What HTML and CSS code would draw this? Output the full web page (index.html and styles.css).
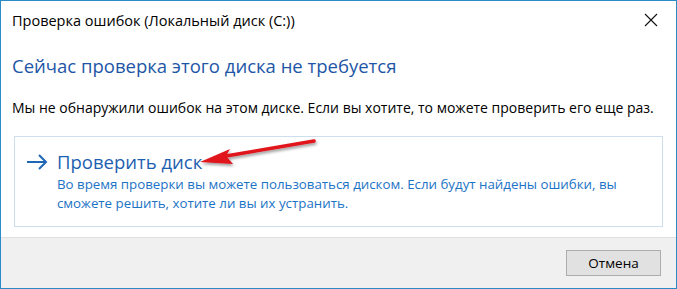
FILE: index.html
```html
<!DOCTYPE html>
<html lang="ru">
<head>
    <meta charset="UTF-8">
    <meta name="viewport" content="width=device-width, initial-scale=1.0">
    <title>Проверка ошибок</title>
    <link rel="stylesheet" href="styles.css">
</head>
<body>
    <div class="window">
        <div class="titlebar">
            <span class="title">Проверка ошибок (Локальный диск (C:))</span>
            <span class="close">
                <svg width="14" height="14" viewBox="0 0 14 14">
                    <path d="M1 1 L13 13 M13 1 L1 13" stroke="#111" stroke-width="1.1" fill="none"/>
                </svg>
            </span>
        </div>

        <div class="content">
            <h1 class="heading">Сейчас проверка этого диска не требуется</h1>
            <p class="message">Мы не обнаружили ошибок на этом диске. Если вы хотите, то можете проверить его еще раз.</p>

            <div class="command-link">
                <div class="command-row">
                    <svg class="command-arrow" width="22" height="16" viewBox="0 0 22 16">
                        <path d="M1 8 H20 M13 1 L20 8 L13 15" stroke="#1f66b5" stroke-width="2" fill="none"/>
                    </svg>
                    <span class="command-title">Проверить диск</span>
                </div>
                <p class="command-desc">Во время проверки вы можете пользоваться диском. Если будут найдены ошибки, вы сможете решить, хотите ли вы их устранить.</p>
            </div>
        </div>

        <div class="footer">
            <button class="btn">Отмена</button>
        </div>

        <!-- red annotation arrow drawn over the dialog -->
        <svg class="annotation" width="677" height="289" viewBox="0 0 677 289">
            <defs>
                <filter id="shadow" x="-10%" y="-50%" width="120%" height="200%">
                    <feGaussianBlur in="SourceAlpha" stdDeviation="1.5"/>
                    <feOffset dx="1" dy="2"/>
                    <feComponentTransfer><feFuncA type="linear" slope="0.4"/></feComponentTransfer>
                    <feMerge><feMergeNode/><feMergeNode in="SourceGraphic"/></feMerge>
                </filter>
            </defs>
            <g filter="url(#shadow)">
                <path d="M314 141 L226 156" stroke="#e0141c" stroke-width="3.5" stroke-linecap="round" fill="none"/>
                <path d="M200 162 L230 149 L226 156 L233 164 Z" fill="#e0141c"/>
            </g>
        </svg>
    </div>
</body>
</html>
```

FILE: styles.css
```css
body {
    margin: 0;
    padding: 0;
    font-family: 'Open Sans', 'Noto Sans', sans-serif;
    background-color: #fff;
    color: #000;
}

.window {
    position: relative;
    width: 677px;
    height: 289px;
    box-sizing: border-box;
    border: 1px solid #2a8bc6;
    display: flex;
    flex-direction: column;
    background-color: #fff;
}

.titlebar {
    height: 38px;
    display: flex;
    align-items: center;
    justify-content: space-between;
    padding: 0 18px 0 11px;
    flex-shrink: 0;
}

.title {
    font-size: 14.5px;
    color: #000;
}

.close {
    display: flex;
    align-items: center;
}

.content {
    flex: 1;
    padding: 0 13px 0 11px;
}

.heading {
    margin: 14px 0 0;
    font-size: 18.5px;
    font-weight: normal;
    color: #1d56a6;
}

.message {
    margin: 20px 0 0;
    font-size: 14px;
    color: #000;
}

.command-link {
    margin: 19px 0 0 2px;
    border: 1px solid #cfdeec;
    padding: 12px 0 13px 11px;
    height: 64px;
}

.command-row {
    display: flex;
    align-items: center;
    gap: 9px;
}

.command-title {
    font-size: 18.5px;
    color: #1d5fb0;
    line-height: 26px;
}

.command-desc {
    margin: 0 0 0 31px;
    font-size: 13.3px;
    line-height: 19px;
    color: #1b73c6;
}

.footer {
    height: 50px;
    flex-shrink: 0;
    background-color: #f0f0f0;
    border-top: 1px solid #e0e0e0;
    display: flex;
    align-items: center;
    justify-content: flex-end;
    padding-right: 15px;
}

.btn {
    width: 95px;
    height: 26px;
    background-color: #e1e1e1;
    border: 1px solid #adadad;
    font-family: 'Open Sans', 'Noto Sans', sans-serif;
    font-size: 13.5px;
    color: #000;
    padding: 0;
}

.annotation {
    position: absolute;
    left: -1px;
    top: -1px;
    pointer-events: none;
}
```
